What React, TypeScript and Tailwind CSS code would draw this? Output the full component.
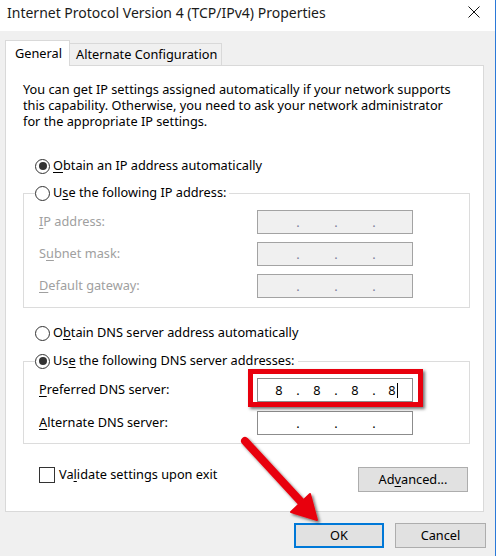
import type { ReactNode } from 'react'

function U({ children }: { children: ReactNode }) {
  return <span className="underline decoration-1 underline-offset-2">{children}</span>
}

function Radio({ checked }: { checked?: boolean }) {
  return (
    <span className="flex h-[15px] w-[15px] shrink-0 items-center justify-center rounded-full border border-[#333333] bg-white">
      {checked ? <span className="h-[8px] w-[8px] rounded-full bg-[#333333]" /> : null}
    </span>
  )
}

function IpField({
  values = ['', '', '', ''],
  disabled,
  cursor,
}: {
  values?: string[]
  disabled?: boolean
  cursor?: boolean
}) {
  return (
    <div
      className={[
        'flex h-[24px] w-[156px] items-center border pl-[6px] leading-[16px]',
        disabled ? 'border-[#a3a3a3] bg-[#f0f0f0] text-[#7d7d9c]' : 'border-[#8c8c8c] bg-white text-black',
      ].join(' ')}
    >
      {values.map((value, index) => (
        <div className="flex items-center" key={index}>
          {index > 0 ? <span className="w-[8px] text-center">.</span> : null}
          <span className="flex w-[30px] items-center justify-center text-black">
            {value}
            {cursor && index === 3 ? <span className="ml-px inline-block h-[15px] w-px bg-black" /> : null}
          </span>
        </div>
      ))}
    </div>
  )
}

function Arrow() {
  return (
    <svg className="pointer-events-none absolute left-0 top-0" width="496" height="556" viewBox="0 0 496 556">
      <defs>
        <filter id="arrow-shadow" x="-20%" y="-20%" width="140%" height="140%">
          <feDropShadow dx="2" dy="2" stdDeviation="1.5" floodColor="#000000" floodOpacity="0.55" />
        </filter>
      </defs>
      <g filter="url(#arrow-shadow)" fill="#e8000d" stroke="#e8000d">
        <line x1="245" y1="441" x2="303" y2="504" strokeWidth="8" strokeLinecap="round" />
        <polygon points="317,520 291,512 310,494" strokeWidth="2" strokeLinejoin="round" />
      </g>
    </svg>
  )
}

export default function App() {
  return (
    <div className="relative h-[556px] w-[496px] overflow-hidden border-r border-[#2b79d8] bg-[#f0f0f0] font-['Noto_Sans',sans-serif] text-[12.75px] text-black">
      <div className="flex h-[31px] items-start justify-between bg-white pl-[7px] pr-[15px] pt-[4px]">
        <span className="text-[14px] leading-[18px] text-[#1a1a1a]">
          Internet Protocol Version 4 (TCP/IPv4) Properties
        </span>
        <svg className="mt-[2px]" width="12" height="12" viewBox="0 0 12 12">
          <path d="M0.5 0.5 L11.5 11.5 M11.5 0.5 L0.5 11.5" stroke="#111111" strokeWidth="1" fill="none" />
        </svg>
      </div>

      <div className="px-[5px] pt-[9px]">
        <div className="flex items-end">
          <div className="relative z-10 -mb-px flex h-[26px] w-[65px] items-center border border-b-0 border-[#d9d9d9] bg-white pl-[9px]">
            General
          </div>
          <div className="flex h-[22px] w-[152px] items-center border border-l-0 border-b-0 border-[#d9d9d9] bg-[#f0f0f0] pl-[6px]">
            Alternate Configuration
          </div>
        </div>

        <div className="h-[447px] w-[479px] border border-[#d9d9d9] bg-white">
          <p className="ml-[17px] mt-[15px] leading-[16px]">
            You can get IP settings assigned automatically if your network supports
            <br />
            this capability. Otherwise, you need to ask your network administrator
            <br />
            for the appropriate IP settings.
          </p>

          <label className="ml-[29px] mt-[29px] flex h-[16px] items-center gap-[3px]">
            <Radio checked />
            <span>
              <U>O</U>btain an IP address automatically
            </span>
          </label>

          <fieldset className="ml-[17px] mt-[11px] w-[447px] border border-[#dcdcdc] pb-[9px]">
            <legend className="ml-[11px] pr-[3px]">
              <span className="flex h-[16px] items-center gap-[3px]">
                <Radio />
                <span>
                  U<U>s</U>e the following IP address:
                </span>
              </span>
            </legend>
            <div className="mt-[9px] flex flex-col gap-[8px] pl-[15px] text-[#a0a0a0]">
              <div className="flex items-center">
                <span className="w-[218px]">
                  <U>I</U>P address:
                </span>
                <IpField disabled />
              </div>
              <div className="flex items-center">
                <span className="w-[218px]">
                  S<U>u</U>bnet mask:
                </span>
                <IpField disabled />
              </div>
              <div className="flex items-center">
                <span className="w-[218px]">
                  <U>D</U>efault gateway:
                </span>
                <IpField disabled />
              </div>
            </div>
          </fieldset>

          <label className="ml-[29px] mt-[17px] flex h-[16px] items-center gap-[3px]">
            <Radio />
            <span>
              O<U>b</U>tain DNS server address automatically
            </span>
          </label>

          <fieldset className="ml-[17px] mt-[12px] w-[447px] border border-[#dcdcdc] pb-[8px]">
            <legend className="ml-[11px] pr-[3px]">
              <span className="flex h-[16px] items-center gap-[3px]">
                <Radio checked />
                <span>
                  Us<U>e</U> the following DNS server addresses:
                </span>
              </span>
            </legend>
            <div className="mt-[9px] flex flex-col gap-[9px] pl-[15px]">
              <div className="flex items-center">
                <span className="w-[218px]">
                  <U>P</U>referred DNS server:
                </span>
                <div className="relative">
                  <IpField values={['8', '8', '8', '8']} cursor />
                  <div className="absolute -left-[9px] -top-[9px] h-[38px] w-[175px] border-[5px] border-[#e8000d] shadow-[2px_2px_3px_rgba(0,0,0,0.55)]" />
                </div>
              </div>
              <div className="flex items-center">
                <span className="w-[218px]">
                  <U>A</U>lternate DNS server:
                </span>
                <IpField />
              </div>
            </div>
          </fieldset>

          <div className="mt-[21px] flex items-start justify-between pl-[33px] pr-[15px]">
            <label className="flex items-center gap-[4px]">
              <span className="h-[16px] w-[16px] border border-[#333333] bg-white" />
              <span>
                Va<U>l</U>idate settings upon exit
              </span>
            </label>
            <button
              className="mt-[2px] h-[25px] w-[110px] border border-[#adadad] bg-[#e1e1e1] text-center"
              type="button"
            >
              Ad<U>v</U>anced...
            </button>
          </div>
        </div>
      </div>

      <div className="mt-[11px] flex justify-end gap-[11px] pr-[9px]">
        <button className="h-[25px] w-[90px] border-2 border-[#0078d7] bg-[#e1e1e1]" type="button">
          OK
        </button>
        <button className="h-[25px] w-[91px] border border-[#adadad] bg-[#e1e1e1]" type="button">
          Cancel
        </button>
      </div>

      <Arrow />
    </div>
  )
}
